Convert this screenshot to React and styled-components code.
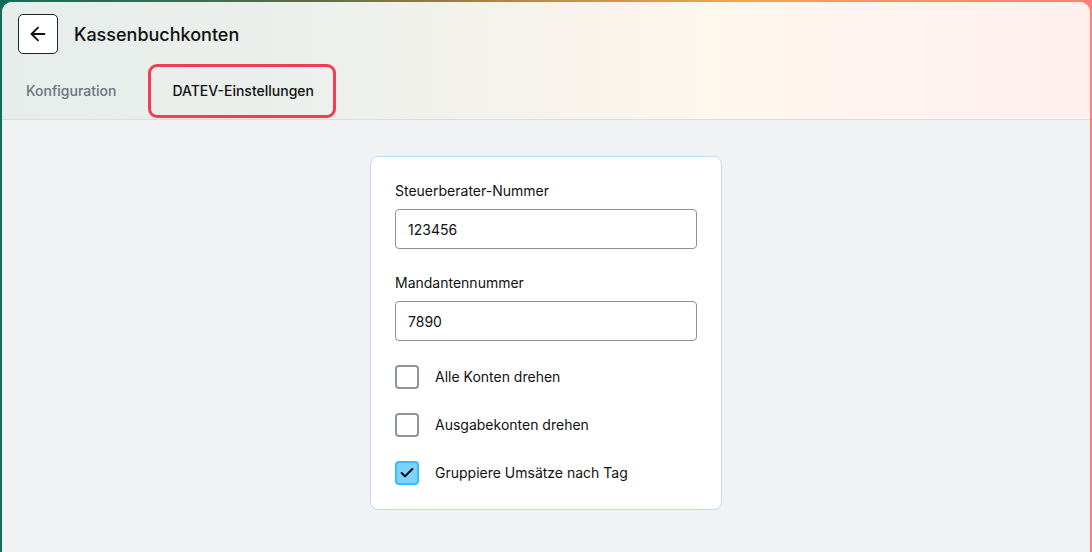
import React, { useState } from 'react';
import styled, { createGlobalStyle } from 'styled-components';
import { ArrowLeft, Check } from 'lucide-react';

const GlobalStyle = createGlobalStyle`
    html, body {
        margin: 0;
        padding: 0;
    }

    body {
        font-family: Inter, 'Noto Sans', sans-serif;
        color: #111827;
        -webkit-font-smoothing: antialiased;
    }

    * {
        box-sizing: border-box;
    }
`;

const Frame = styled.div`
    width: 1092px;
    height: 552px;
    padding: 2px 2px 0 2px;
    background: linear-gradient(90deg, #0f6e5c 0%, #5a6a48 28%, #c8913f 52%, #ffa245 68%, #ff7d78 100%);
`;

const Panel = styled.div`
    height: 100%;
    display: flex;
    flex-direction: column;
    border-radius: 10px 10px 0 0;
    overflow: hidden;
    background: #f1f2f4;
`;

const Header = styled.header`
    display: flex;
    flex-direction: column;
    gap: 10px;
    padding-top: 12px;
    background: linear-gradient(90deg, #e6edeb 0%, #edf0ec 30%, #f6f3ec 50%, #fff7ec 66%, #fff3f0 82%, #fff0f0 100%);
    border-bottom: 1px solid #dcdcdc;
`;

const TitleRow = styled.div`
    display: flex;
    align-items: center;
    gap: 16px;
    padding: 0 16px;
`;

const BackButton = styled.button`
    width: 40px;
    height: 40px;
    display: flex;
    align-items: center;
    justify-content: center;
    padding: 0;
    border: 1px solid #1f2328;
    border-radius: 5px;
    background: #ffffff;
    color: #111;
    cursor: pointer;
`;

const Title = styled.h1`
    margin: 0;
    font-size: 18px;
    font-weight: 500;
    color: #111;
`;

const TabBar = styled.nav`
    display: flex;
    align-items: stretch;
    gap: 22px;
    padding-left: 14px;
    height: 55px;
`;

const Tab = styled.button`
    display: flex;
    align-items: center;
    padding: 0 ${p => (p.$active ? '19px 1px 21px' : '7px 1px 7px')};
    border: 3px solid ${p => (p.$active ? '#f43b57' : 'transparent')};
    border-radius: 9px;
    margin-bottom: 1px;
    background: transparent;
    font-family: inherit;
    font-size: 14px;
    font-weight: 500;
    color: ${p => (p.$active ? '#111' : '#6b7280')};
    cursor: pointer;
`;

const Body = styled.main`
    flex: 1;
    display: flex;
    justify-content: center;
    align-items: flex-start;
    padding-top: 36px;
`;

const Card = styled.section`
    width: 352px;
    padding: 24px;
    background: #ffffff;
    border: 1px solid #bfdbfe;
    border-radius: 8px;
    display: flex;
    flex-direction: column;
    gap: 24px;
`;

const Field = styled.label`
    display: flex;
    flex-direction: column;
    gap: 8px;
`;

const FieldLabel = styled.span`
    font-size: 14px;
    line-height: 20px;
    font-weight: 400;
    color: #111;
`;

const Input = styled.input`
    width: 100%;
    height: 40px;
    padding: 0 12px;
    border: 1px solid #8b929c;
    border-radius: 4px;
    font-family: inherit;
    font-size: 14px;
    color: #111;
    background: #fff;
    outline: none;
`;

const CheckRow = styled.label`
    display: flex;
    align-items: center;
    gap: 16px;
    cursor: pointer;
`;

const Box = styled.span`
    width: 24px;
    height: 24px;
    display: flex;
    align-items: center;
    justify-content: center;
    border-radius: 4px;
    border: 2px solid ${p => (p.$checked ? '#38bdf8' : '#8e959f')};
    background: ${p => (p.$checked ? '#7dd3fc' : '#ffffff')};
    color: #000;
`;

const CheckLabel = styled.span`
    font-size: 14px;
    line-height: 20px;
    font-weight: 400;
    color: #111;
`;

function Checkbox({ label, checked, onToggle }) {
    return (
        <CheckRow onClick={onToggle}>
            <Box $checked={checked}>{checked && <Check size={16} strokeWidth={3} />}</Box>
            <CheckLabel>{label}</CheckLabel>
        </CheckRow>
    );
}

export default function App() {
    const [beraterNr, setBeraterNr] = useState('123456');
    const [mandantNr, setMandantNr] = useState('7890');
    const [flags, setFlags] = useState({ alle: false, ausgabe: false, gruppiere: true });

    const toggle = key => setFlags(f => ({ ...f, [key]: !f[key] }));

    return (
        <>
            <GlobalStyle />
            <Frame>
                <Panel>
                    <Header>
                        <TitleRow>
                            <BackButton aria-label="Zurück">
                                <ArrowLeft size={22} strokeWidth={2} />
                            </BackButton>
                            <Title>Kassenbuchkonten</Title>
                        </TitleRow>
                        <TabBar>
                            <Tab>Konfiguration</Tab>
                            <Tab $active>DATEV-Einstellungen</Tab>
                        </TabBar>
                    </Header>
                    <Body>
                        <Card>
                            <Field>
                                <FieldLabel>Steuerberater-Nummer</FieldLabel>
                                <Input value={beraterNr} onChange={e => setBeraterNr(e.target.value)} />
                            </Field>
                            <Field>
                                <FieldLabel>Mandantennummer</FieldLabel>
                                <Input value={mandantNr} onChange={e => setMandantNr(e.target.value)} />
                            </Field>
                            <Checkbox label="Alle Konten drehen" checked={flags.alle} onToggle={() => toggle('alle')} />
                            <Checkbox label="Ausgabekonten drehen" checked={flags.ausgabe} onToggle={() => toggle('ausgabe')} />
                            <Checkbox label="Gruppiere Umsätze nach Tag" checked={flags.gruppiere} onToggle={() => toggle('gruppiere')} />
                        </Card>
                    </Body>
                </Panel>
            </Frame>
        </>
    );
}
